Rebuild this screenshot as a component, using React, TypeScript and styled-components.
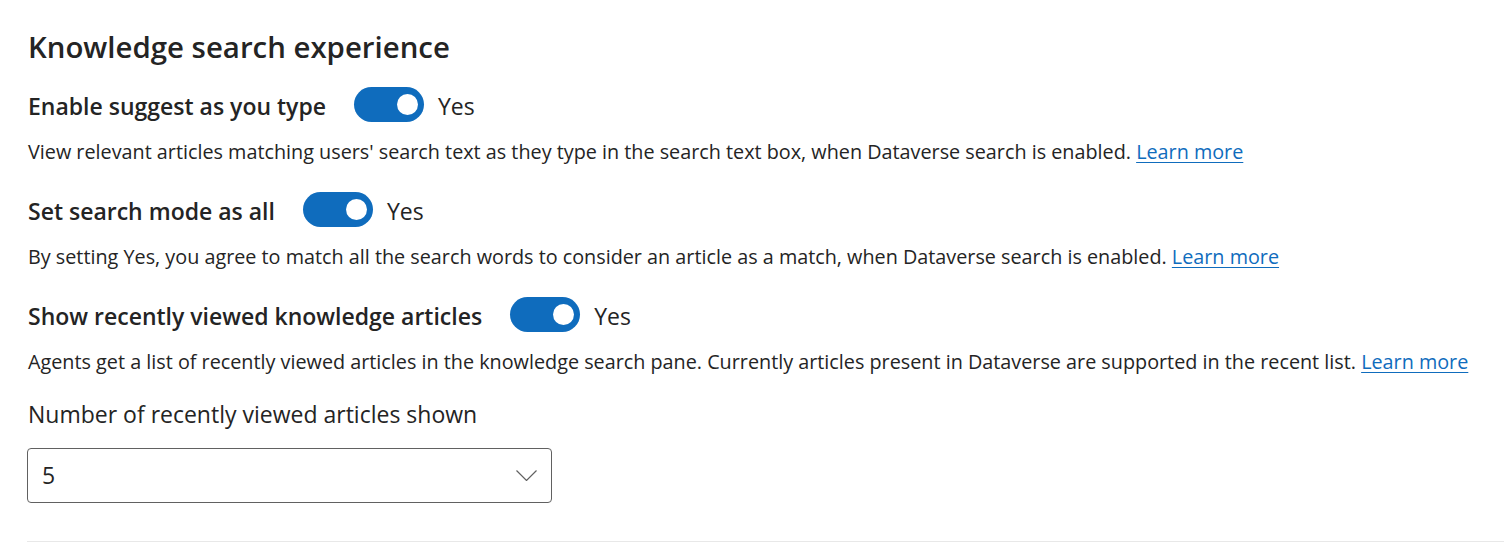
import React from "react";
import styled, { createGlobalStyle } from "styled-components";

const GlobalStyle = createGlobalStyle`
  html, body { margin: 0; padding: 0; background: #ffffff; }
  body { font-family: "Open Sans", "Noto Sans", sans-serif; color: #242424; }
`;

const Page = styled.div`
  display: flex;
  flex-direction: column;
  padding: 27px 0 0 28px;
`;

const Title = styled.h2`
  margin: 0 0 20px 0;
  font-size: 29.4px;
  line-height: 40px;
  font-weight: 600;
  color: #242424;
`;

const Section = styled.div`
  display: flex;
  flex-direction: column;
  margin-bottom: 26px;
`;

const ToggleRow = styled.div`
  display: flex;
  align-items: flex-start;
  height: 35px;
`;

const RowLabel = styled.span`
  font-size: 23px;
  line-height: 35px;
  font-weight: 600;
  margin-top: 2px;
  margin-right: 28px;
  white-space: nowrap;
`;

const Track = styled.button<{ $on: boolean }>`
  position: relative;
  width: 70px;
  height: 35px;
  border-radius: 18px;
  border: none;
  padding: 0;
  background: ${(p) => (p.$on ? "#0f6cbd" : "#ffffff")};
  cursor: pointer;
  flex: none;
`;

const Knob = styled.span<{ $on: boolean }>`
  position: absolute;
  top: 7px;
  ${(p) => (p.$on ? "right: 6px;" : "left: 6px;")}
  width: 21px;
  height: 21px;
  border-radius: 50%;
  background: #ffffff;
`;

const StateText = styled.span`
  font-size: 23px;
  line-height: 35px;
  margin-top: 2px;
  margin-left: 14px;
  white-space: nowrap;
`;

const Description = styled.p`
  margin: 16px 0 0 0;
  font-size: 19.8px;
  line-height: 28px;
  white-space: nowrap;
`;

const Link = styled.a`
  color: #0f6cbd;
  text-decoration: underline;
  text-underline-offset: 3px;
  cursor: pointer;
`;

const FieldLabel = styled.label`
  display: block;
  margin: -4px 0 18px 0;
  font-size: 23px;
  line-height: 32px;
  font-weight: 400;
`;

const Select = styled.div`
  box-sizing: border-box;
  width: 525px;
  height: 55px;
  border: 1px solid #616161;
  border-radius: 4px;
  display: flex;
  align-items: center;
  justify-content: space-between;
  padding: 0 14px 0 14px;
  font-size: 23px;
  line-height: 53px;
  margin-left: -1px;
`;

const Chevron = styled.svg`
  width: 21px;
  height: 11px;
  display: block;
`;

const Divider = styled.hr`
  margin: 38px 0 0 -1px;
  border: none;
  border-top: 1px solid #e8e8e8;
  height: 0;
`;

type Setting = { label: string; desc: string };

const settings: Setting[] = [
  {
    label: "Enable suggest as you type",
    desc: "View relevant articles matching users' search text as they type in the search text box, when Dataverse search is enabled.",
  },
  {
    label: "Set search mode as all",
    desc: "By setting Yes, you agree to match all the search words to consider an article as a match, when Dataverse search is enabled.",
  },
  {
    label: "Show recently viewed knowledge articles",
    desc: "Agents get a list of recently viewed articles in the knowledge search pane. Currently articles present in Dataverse are supported in the recent list.",
  },
];

export default function App() {
  return (
    <Page>
      <GlobalStyle />
      <Title>Knowledge search experience</Title>
      {settings.map((s) => (
        <Section key={s.label}>
          <ToggleRow>
            <RowLabel>{s.label}</RowLabel>
            <Track $on={true} aria-pressed="true" aria-label={s.label}>
              <Knob $on={true} />
            </Track>
            <StateText>Yes</StateText>
          </ToggleRow>
          <Description>
            {s.desc} <Link>Learn more</Link>
          </Description>
        </Section>
      ))}
      <FieldLabel>Number of recently viewed articles shown</FieldLabel>
      <Select>
        <span>5</span>
        <Chevron viewBox="0 0 21 11" fill="none">
          <path d="M0.5 0.5 L10.5 10.5 L20.5 0.5" stroke="#616161" strokeWidth="1.2" />
        </Chevron>
      </Select>
      <Divider />
    </Page>
  );
}
